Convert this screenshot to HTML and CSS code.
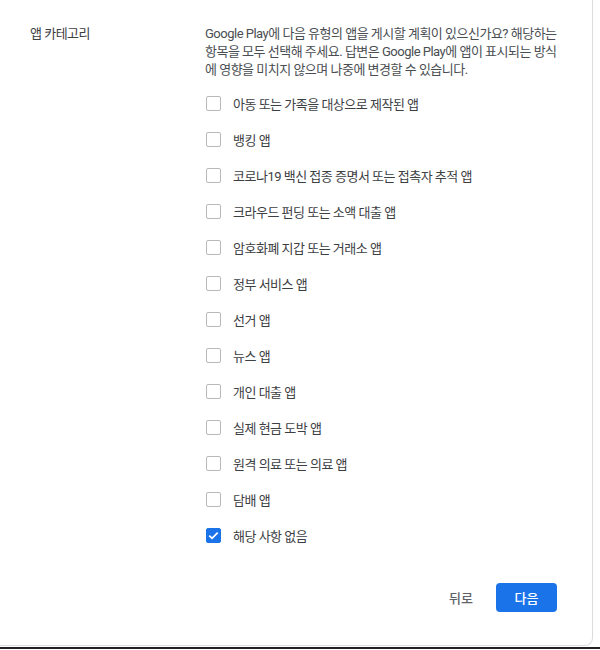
FILE: index.html
```html
<!DOCTYPE html>
<html lang="ko">
<head>
<meta charset="utf-8">
<link rel="stylesheet" href="styles.css">
</head>
<body>
<div class="card">
  <div class="section">
    <div class="label">앱 카테고리</div>
    <div class="content">
      <p class="desc">Google Play에 다음 유형의 앱을 게시할 계획이 있으신가요? 해당하는 항목을 모두 선택해 주세요. 답변은 Google Play에 앱이 표시되는 방식에 영향을 미치지 않으며 나중에 변경할 수 있습니다.</p>
      <ul class="options">
        <li class="option"><span class="box"></span><span class="text">아동 또는 가족을 대상으로 제작된 앱</span></li>
        <li class="option"><span class="box"></span><span class="text">뱅킹 앱</span></li>
        <li class="option"><span class="box"></span><span class="text">코로나19 백신 접종 증명서 또는 접촉자 추적 앱</span></li>
        <li class="option"><span class="box"></span><span class="text">크라우드 펀딩 또는 소액 대출 앱</span></li>
        <li class="option"><span class="box"></span><span class="text">암호화폐 지갑 또는 거래소 앱</span></li>
        <li class="option"><span class="box"></span><span class="text">정부 서비스 앱</span></li>
        <li class="option"><span class="box"></span><span class="text">선거 앱</span></li>
        <li class="option"><span class="box"></span><span class="text">뉴스 앱</span></li>
        <li class="option"><span class="box"></span><span class="text">개인 대출 앱</span></li>
        <li class="option"><span class="box"></span><span class="text">실제 현금 도박 앱</span></li>
        <li class="option"><span class="box"></span><span class="text">원격 의료 또는 의료 앱</span></li>
        <li class="option"><span class="box"></span><span class="text">담배 앱</span></li>
        <li class="option"><span class="box checked"><svg viewBox="0 0 16 16" width="15" height="15"><path d="M2.8 8.2 L6.2 11.5 L13.2 4.5" fill="none" stroke="#fff" stroke-width="2.2"/></svg></span><span class="text">해당 사항 없음</span></li>
      </ul>
    </div>
  </div>
  <div class="actions">
    <button class="btn-text">뒤로</button>
    <button class="btn-primary">다음</button>
  </div>
</div>
<div class="bottom-bar"></div>
</body>
</html>
```

FILE: styles.css
```css
* { box-sizing: border-box; }
html, body { margin: 0; padding: 0; background: #fff; }
body {
  font-family: Roboto, "Noto Sans CJK KR", sans-serif;
  font-size: 13px;
  letter-spacing: -0.5px;
  color: #3c4043;
  width: 600px;
  height: 650px;
  overflow: hidden;
  display: flex;
  flex-direction: column;
}
.card {
  width: 593px;
  height: 647px;
  margin-top: -1px;
  border: 1px solid #dadce0;
  border-left: none;
  border-bottom-right-radius: 8px;
  background: #fff;
  padding: 25px 0 0 0;
  display: flex;
  flex-direction: column;
}
.section {
  display: flex;
}
.label {
  width: 205px;
  padding-left: 30px;
  line-height: 18px;
  color: #3c4043;
}
.content {
  width: 355px;
}
.desc {
  margin: 0;
  line-height: 18px;
  color: #4a4e52;
}
.options {
  list-style: none;
  margin: 6px 0 0 0;
  padding: 0;
}
.option {
  height: 36px;
  display: flex;
  align-items: center;
}
.box {
  width: 15px;
  height: 15px;
  border: 1px solid #b9b9b9;
  border-radius: 2px;
  margin-left: 1px;
  margin-right: 12px;
  display: flex;
  align-items: center;
  justify-content: center;
}
.box.checked {
  background: #1a73e8;
  border-color: #1a73e8;
}
.text {
  color: #3c4043;
}
.actions {
  display: flex;
  justify-content: flex-end;
  align-items: center;
  gap: 10px;
  margin-top: 30px;
  padding-right: 35px;
}
.btn-text, .btn-primary {
  font-family: inherit;
  font-size: 13px;
  font-weight: 500;
  letter-spacing: 0;
  border: none;
  border-radius: 4px;
  height: 29px;
  cursor: pointer;
}
.btn-text {
  background: transparent;
  color: #5f6368;
  width: 50px;
}
.btn-primary {
  background: #1a73e8;
  color: #fff;
  width: 61px;
}
.bottom-bar {
  margin-top: 1px;
  height: 2px;
  background: #202124;
}
```
